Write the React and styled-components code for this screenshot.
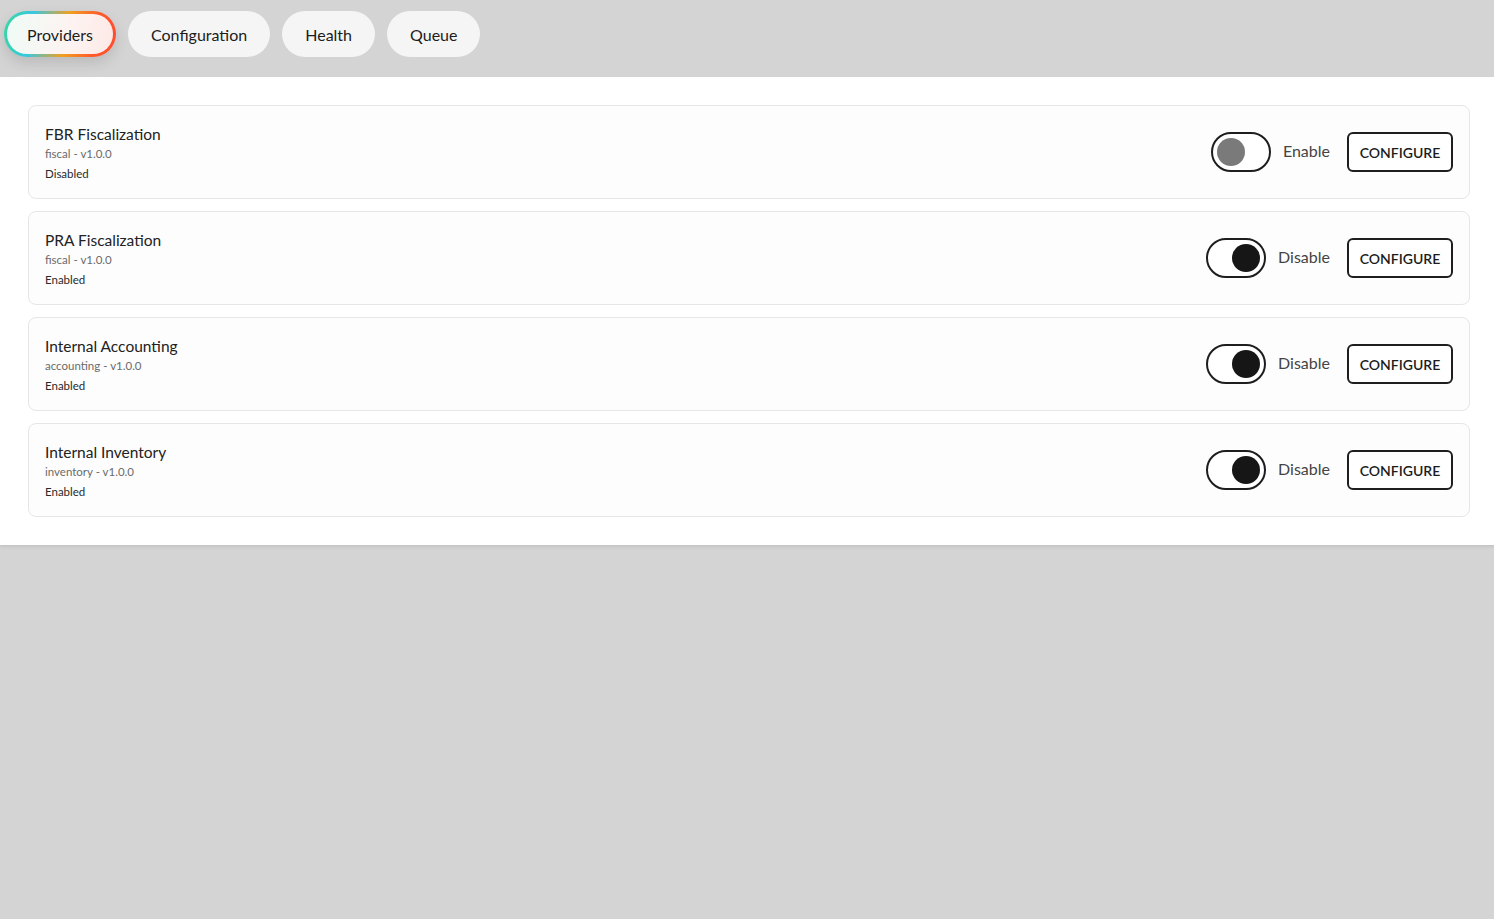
import React from "react";
import styled, { createGlobalStyle, css } from "styled-components";

const Global = createGlobalStyle`
  html, body { margin: 0; padding: 0; }
  body {
    background: #d4d4d4;
    font-family: Lato, "Noto Sans", sans-serif;
    color: #1c1c1c;
  }
`;

const Page = styled.div`
  min-height: 919px;
  background: #d4d4d4;
`;

const TabBar = styled.nav`
  display: flex;
  align-items: flex-start;
  gap: 12px;
  height: 77px;
  padding: 11px 4px 0;
  box-sizing: border-box;
`;

const Tab = styled.button`
  height: 46px;
  padding: 0 23px;
  border-radius: 23px;
  border: none;
  background: #f5f5f5;
  font-family: inherit;
  font-size: 16px;
  color: #1c1c1c;
  cursor: pointer;
  ${(p) =>
    p.$active &&
    css`
      border: 3px solid transparent;
      padding: 0 20px;
      background:
        linear-gradient(100deg, #effbf6, #fdf3f1 60%, #fde9e6) padding-box,
        linear-gradient(100deg, #3ad6a0 0%, #38c8e0 25%, #f0a020 55%, #ff5a2a 80%, #ff4a30 100%) border-box;
      box-shadow: 0 6px 14px rgba(0, 0, 0, 0.12);
    `}
`;

const Panel = styled.main`
  background: #ffffff;
  padding: 28px 24px 28px 28px;
  display: flex;
  flex-direction: column;
  gap: 12px;
  box-shadow: 0 2px 3px rgba(0, 0, 0, 0.08);
`;

const Card = styled.section`
  display: flex;
  align-items: center;
  justify-content: space-between;
  height: 94px;
  box-sizing: border-box;
  padding: 0 16px;
  background: #fdfdfd;
  border: 1px solid #e6e6e6;
  border-radius: 8px;
`;

const Info = styled.div`
  display: flex;
  flex-direction: column;
  margin-top: 4px;
`;

const Title = styled.div`
  font-size: 15.5px;
  line-height: 20px;
  color: #222;
`;

const Meta = styled.div`
  font-size: 11.5px;
  line-height: 20px;
  color: ${(p) => (p.$muted ? "#6b6b6b" : "#2a2a2a")};
`;

const Actions = styled.div`
  display: flex;
  align-items: center;
`;

const Switch = styled.button`
  width: 60px;
  height: 40px;
  box-sizing: border-box;
  border: 2px solid #1e1e1e;
  border-radius: 20px;
  background: #fff;
  padding: 0 4px;
  display: flex;
  align-items: center;
  justify-content: ${(p) => (p.$on ? "flex-end" : "flex-start")};
  cursor: pointer;
  margin-right: 12px;
`;

const Knob = styled.span`
  width: 28px;
  height: 28px;
  border-radius: 50%;
  background: ${(p) => (p.$on ? "#161616" : "#7a7a7a")};
`;

const SwitchLabel = styled.span`
  font-size: 16px;
  color: #444;
  margin-right: 17px;
  margin-top: -3px;
`;

const ConfigureButton = styled.button`
  width: 106px;
  height: 40px;
  border: 2px solid #1e1e1e;
  border-radius: 6px;
  background: #fff;
  font-family: inherit;
  font-size: 14px;
  font-weight: 600;
  color: #1c1c1c;
  cursor: pointer;
`;

const providers = [
  { name: "FBR Fiscalization", type: "fiscal", version: "v1.0.0", enabled: false },
  { name: "PRA Fiscalization", type: "fiscal", version: "v1.0.0", enabled: true },
  { name: "Internal Accounting", type: "accounting", version: "v1.0.0", enabled: true },
  { name: "Internal Inventory", type: "inventory", version: "v1.0.0", enabled: true },
];

const tabs = ["Providers", "Configuration", "Health", "Queue"];

export default function App() {
  return (
    <Page>
      <Global />
      <TabBar>
        {tabs.map((t, i) => (
          <Tab key={t} $active={i === 0}>
            {t}
          </Tab>
        ))}
      </TabBar>
      <Panel>
        {providers.map((p) => (
          <Card key={p.name}>
            <Info>
              <Title>{p.name}</Title>
              <Meta $muted>
                {p.type} - {p.version}
              </Meta>
              <Meta>{p.enabled ? "Enabled" : "Disabled"}</Meta>
            </Info>
            <Actions>
              <Switch $on={p.enabled} aria-label="toggle">
                <Knob $on={p.enabled} />
              </Switch>
              <SwitchLabel>{p.enabled ? "Disable" : "Enable"}</SwitchLabel>
              <ConfigureButton>CONFIGURE</ConfigureButton>
            </Actions>
          </Card>
        ))}
      </Panel>
    </Page>
  );
}
